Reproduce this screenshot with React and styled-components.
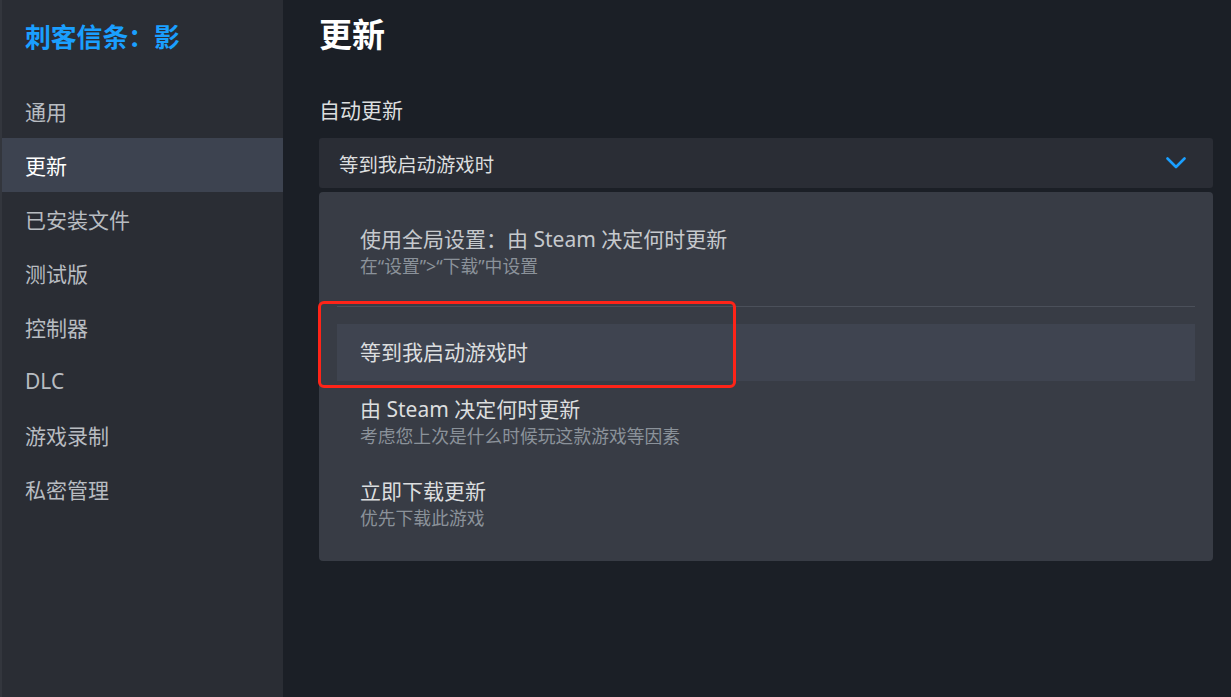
import React from "react";
import styled, { createGlobalStyle } from "styled-components";

const Global = createGlobalStyle`
  html, body { margin: 0; padding: 0; background: #1b1f26; }
  body { font-family: "Noto Sans", "Noto Sans CJK SC", sans-serif; }
  * { box-sizing: border-box; }
`;

const Page = styled.div`
  display: flex;
  width: 1231px;
  height: 697px;
  overflow: hidden;
  background: #1b1f26;
`;

const Sidebar = styled.nav`
  width: 283px;
  flex-shrink: 0;
  background: #2a2d34;
  border-left: 2px solid #33363d;
  display: flex;
  flex-direction: column;
`;

const GameTitle = styled.div`
  color: #1a9fff;
  font-weight: 700;
  font-size: 25.8px;
  line-height: 34px;
  padding: 20px 0 0 23px;
  height: 84px;
  white-space: nowrap;
`;

const NavItem = styled.div`
  height: 54px;
  display: flex;
  align-items: center;
  padding-left: 23px;
  font-size: 21px;
  color: ${(p) => (p.$active ? "#ffffff" : "#b8bcc1")};
  background: ${(p) => (p.$active ? "#3d4350" : "transparent")};
`;

const Main = styled.main`
  flex: 1;
  padding: 14px 18px 0 36px;
  display: flex;
  flex-direction: column;
`;

const Heading = styled.h1`
  margin: 0;
  font-size: 33px;
  line-height: 42px;
  font-weight: 700;
  color: #ffffff;
`;

const Label = styled.div`
  margin-top: 40px;
  font-size: 21px;
  line-height: 28px;
  color: #dcdedf;
`;

const Field = styled.div`
  margin-top: 14px;
  height: 50px;
  background: #2a2d35;
  border-radius: 3px;
  display: flex;
  align-items: center;
  justify-content: space-between;
  padding: 0 27px 0 20px;
  font-size: 19.4px;
  color: #dcdedf;
`;

const Menu = styled.div`
  position: relative;
  margin-top: 4px;
  background: #383c45;
  border-radius: 4px;
  padding: 18px 18px 16px;
  display: flex;
  flex-direction: column;
`;

const Option = styled.div`
  padding: ${(p) => p.$pad || "15px 23px 17px"};
  background: ${(p) => (p.$hl ? "#3f4450" : "transparent")};
  display: flex;
  flex-direction: column;
`;

const OptTitle = styled.div`
  font-size: 21px;
  line-height: 26px;
  color: ${(p) => (p.$dim ? "#c6c9cd" : "#dcdedf")};
  white-space: nowrap;
`;

const OptSub = styled.div`
  margin-top: 4px;
  font-size: 17.8px;
  line-height: 20px;
  color: #8b929a;
  white-space: nowrap;
`;

const Separator = styled.div`
  height: 1px;
  background: #4b505a;
  margin-bottom: 17px;
`;

const Highlight = styled.div`
  position: absolute;
  left: -1px;
  top: 109px;
  width: 418px;
  height: 87px;
  border: 3px solid #ff2418;
  border-radius: 6px;
  pointer-events: none;
`;

const Chevron = () => (
  <svg width="20" height="12" viewBox="0 0 20 12" fill="none">
    <path d="M1.5 1.5 L10 10 L18.5 1.5" stroke="#1a9fff" strokeWidth="2.6" strokeLinecap="round" strokeLinejoin="round" />
  </svg>
);

const nav = ["通用", "更新", "已安装文件", "测试版", "控制器", "DLC", "游戏录制", "私密管理"];

export default function App() {
  return (
    <Page>
      <Global />
      <Sidebar>
        <GameTitle>刺客信条：影</GameTitle>
        {nav.map((n) => (
          <NavItem key={n} $active={n === "更新"}>{n}</NavItem>
        ))}
      </Sidebar>
      <Main>
        <Heading>更新</Heading>
        <Label>自动更新</Label>
        <Field>
          <span>等到我启动游戏时</span>
          <Chevron />
        </Field>
        <Menu>
          <Option $pad="16px 23px 30px">
            <OptTitle $dim>使用全局设置：由 Steam 决定何时更新</OptTitle>
            <OptSub>在“设置”&gt;“下载”中设置</OptSub>
          </Option>
          <Separator />
          <Option $hl $pad="15px 23px 16px">
            <OptTitle>等到我启动游戏时</OptTitle>
          </Option>
          <Option>
            <OptTitle>由 Steam 决定何时更新</OptTitle>
            <OptSub>考虑您上次是什么时候玩这款游戏等因素</OptSub>
          </Option>
          <Option>
            <OptTitle>立即下载更新</OptTitle>
            <OptSub>优先下载此游戏</OptSub>
          </Option>
          <Highlight />
        </Menu>
      </Main>
    </Page>
  );
}
